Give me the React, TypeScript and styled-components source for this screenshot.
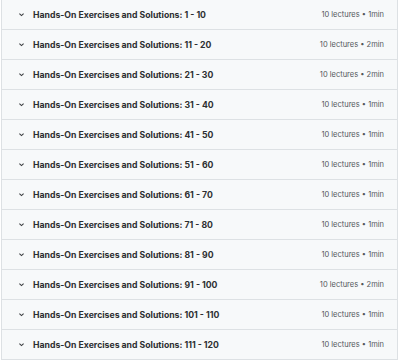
import * as React from "react";
import styled, { createGlobalStyle } from "styled-components";

const GlobalStyle = createGlobalStyle`
  html, body {
    margin: 0;
    padding: 0;
    background: #ffffff;
  }
`;

const Container = styled.div`
  margin: 0 2px 0 1px;
  border: 1px solid #dde1e4;
  border-top: none;
  font-family: Inter, "Liberation Sans", sans-serif;
`;

const Row = styled.div`
  display: flex;
  align-items: center;
  height: 29px;
  padding: 0 13px 0 16px;
  background-color: #f7f9fa;
  border-bottom: 1px solid #dde1e4;
  &:last-child {
    border-bottom: none;
  }
`;

const Chevron = styled.svg`
  width: 7px;
  height: 7px;
  flex-shrink: 0;
  margin-right: 8px;
`;

const Title = styled.div`
  flex: 1;
  font-size: 8.7px;
  font-weight: 700;
  color: #2d2f31;
  white-space: nowrap;
`;

const Meta = styled.div`
  font-size: 7.5px;
  color: #53575a;
  white-space: nowrap;
`;

const sections = [
  ["1 - 10", "1min"],
  ["11 - 20", "2min"],
  ["21 - 30", "2min"],
  ["31 - 40", "1min"],
  ["41 - 50", "1min"],
  ["51 - 60", "1min"],
  ["61 - 70", "1min"],
  ["71 - 80", "1min"],
  ["81 - 90", "1min"],
  ["91 - 100", "2min"],
  ["101 - 110", "1min"],
  ["111 - 120", "1min"],
];

const App: React.FC = () => {
  return (
    <>
      <GlobalStyle />
      <Container>
        {sections.map(([range, time]) => (
          <Row key={range}>
            <Chevron viewBox="0 0 8 8">
              <path d="M1.6 2.9 L4 5.2 L6.4 2.9" fill="none" stroke="#3a3d40" strokeWidth="1.2" />
            </Chevron>
            <Title>Hands-On Exercises and Solutions: {range}</Title>
            <Meta>10 lectures • {time}</Meta>
          </Row>
        ))}
      </Container>
    </>
  );
};

export default App;
